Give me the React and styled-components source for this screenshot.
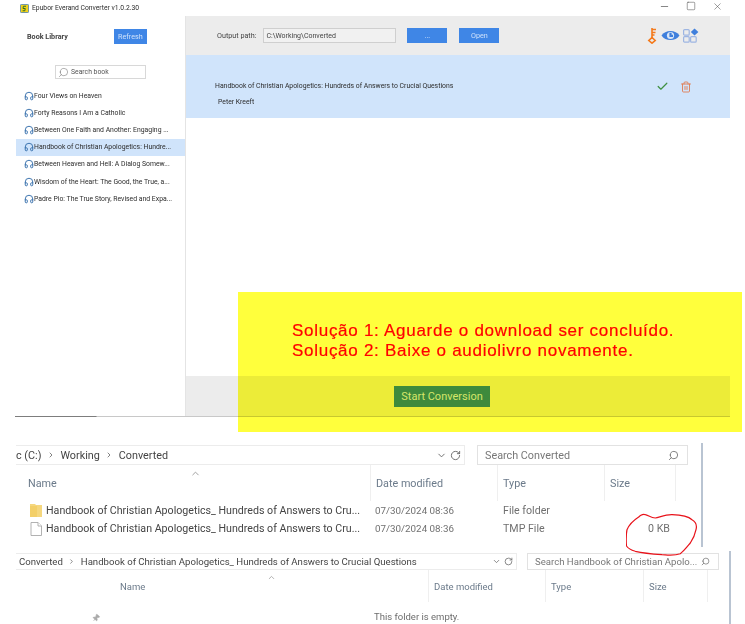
import React from 'react';
import styled, { createGlobalStyle } from 'styled-components';
import { Headphones, Check, Trash2, Search, ChevronDown, RotateCw, ChevronUp, ChevronRight, Minus, Square, X, Pin } from 'lucide-react';

const GlobalStyle = createGlobalStyle`
  html, body { margin: 0; padding: 0; background: #fff; }
  body { font-family: Roboto, "Open Sans", "Liberation Sans", sans-serif; }
  svg { flex: none; }
`;

const Page = styled.div`
  position: relative;
  width: 745px;
  height: 624px;
  overflow: hidden;
  background: #fff;
  filter: blur(0.35px);
`;

const AppWindow = styled.div`
  width: 730px;
  height: 417px;
  display: flex;
  flex-direction: column;
`;

const WindowEdge = styled.div`
  height: 1px;
  flex: none;
  margin-left: 15px;
  background: linear-gradient(to right, #7d7d7d 0, #7d7d7d 81px, #c8c8c8 82px, #c8c8c8 100%);
`;

const TitleBar = styled.div`
  height: 16px;
  display: flex;
  align-items: center;
  padding-left: 20px;
  gap: 3px;
  font-size: 6.75px;
  color: #2c2c2c;
`;

const WindowButtons = styled.div`
  position: absolute;
  top: 1px;
  left: 659px;
  display: flex;
  gap: 16px;
  color: #444;
`;

const AppBody = styled.div`
  flex: 1;
  display: flex;
  min-height: 0;
`;

const Sidebar = styled.div`
  width: 186px;
  flex: none;
  border-right: 1px solid #e4e4e4;
  box-sizing: border-box;
  padding-left: 16px;
  display: flex;
  flex-direction: column;
`;

const LibraryHead = styled.div`
  display: flex;
  align-items: center;
  height: 32px;
  margin-top: 4px;
  padding-left: 11px;
  font-size: 7.2px;
  font-weight: 700;
  color: #444;
`;

const BlueButton = styled.div`
  width: ${p => p.$w}px;
  height: 15px;
  margin-left: ${p => p.$ml}px;
  flex: none;
  background: #3f86e6;
  color: #cfe2fb;
  font-size: 7.2px;
  font-weight: 400;
  display: flex;
  align-items: center;
  justify-content: center;
`;

const SearchBox = styled.div`
  width: 91px;
  height: 14px;
  margin: 13px 0 8px 39px;
  border: 1px solid #d8d8d8;
  box-sizing: border-box;
  display: flex;
  align-items: center;
  gap: 2px;
  padding-left: 2px;
  font-size: 6.8px;
  color: #555;
`;

const BookRow = styled.div`
  height: 17.2px;
  display: flex;
  align-items: center;
  gap: 0;
  padding-left: 8px;
  font-size: 6.85px;
  color: #2c2c2c;
  white-space: nowrap;
  background: ${p => (p.$active ? '#d0e4fb' : 'transparent')};
`;

const Main = styled.div`
  flex: 1;
  display: flex;
  flex-direction: column;
  min-width: 0;
`;

const Toolbar = styled.div`
  height: 39px;
  background: #ececec;
  display: flex;
  align-items: center;
  padding-left: 31px;
  font-size: 7.2px;
  color: #444;
`;

const PathInput = styled.div`
  width: 133px;
  height: 15px;
  margin-left: 7px;
  flex: none;
  box-sizing: border-box;
  border: 1px solid #cfcfcf;
  background: #f1f1f1;
  display: flex;
  align-items: center;
  padding-left: 2px;
  font-size: 7px;
`;

const ToolIcons = styled.div`
  margin-left: auto;
  margin-right: 31px;
  display: flex;
  align-items: center;
  gap: 3px;
`;

const TaskRow = styled.div`
  height: 63px;
  background: #d0e4fb;
  display: flex;
  align-items: center;
  padding-left: 29px;
  color: #2c2c2c;
  font-size: 6.85px;
`;

const TaskText = styled.div`
  display: flex;
  flex-direction: column;
  gap: 6px;
  line-height: 10px;
  margin-top: 14px;
`;

const Author = styled.div`
  padding-left: 3px;
`;

const TaskActions = styled.div`
  margin-left: auto;
  margin-right: 38px;
  display: flex;
  align-items: center;
  gap: 11px;
`;

const Spacer = styled.div`
  flex: 1;
`;

const Footer = styled.div`
  height: 40px;
  background: #ececec;
  display: flex;
  align-items: center;
  justify-content: center;
  padding-right: 32px;
  flex: none;
`;

const ConvertButton = styled.div`
  position: relative;
  z-index: 3;
  width: 96px;
  height: 21px;
  background: #3e8a3c;
  box-sizing: border-box;
  color: #d5e66a;
  font-size: 11px;
  display: flex;
  align-items: center;
  justify-content: center;
`;

const Notice = styled.div`
  position: absolute;
  z-index: 2;
  left: 238px;
  top: 292px;
  width: 504px;
  height: 140px;
  box-sizing: border-box;
  padding: 29px 0 0 54px;
  background: #ffff3c;
  mix-blend-mode: multiply;
  color: #ff0000;
  font-family: "Liberation Sans", sans-serif;
  font-size: 17px;
  line-height: 20px;
  letter-spacing: 0.72px;
  -webkit-text-stroke: 0.2px #ff0000;
  white-space: nowrap;
`;

const Explorer = styled.div`
  width: ${p => p.$w}px;
  margin-top: ${p => p.$mt}px;
  color: #555;
`;

const AddressBar = styled.div`
  display: flex;
  align-items: center;
  height: ${p => p.$h}px;
  margin-left: 16px;
  font-size: ${p => p.$fs}px;
  color: #444;
`;

const Crumbs = styled.div`
  flex: 1;
  display: flex;
  align-items: center;
  gap: 5.5px;
  white-space: nowrap;
  height: 100%;
  box-sizing: border-box;
  padding-left: ${p => p.$pad || 0}px;
  border-top: 1px solid #ececec;
  border-bottom: 1px solid #ececec;
  overflow: hidden;
`;

const AddressTools = styled.div`
  width: ${p => p.$w}px;
  flex: none;
  display: flex;
  align-items: center;
  justify-content: flex-end;
  gap: 3px;
  height: 100%;
  box-sizing: border-box;
  border: 1px solid #ececec;
  border-left: none;
  color: #666;
  padding-right: 3px;
`;

const ExplorerSearch = styled.div`
  width: ${p => p.$w}px;
  flex: none;
  margin-left: ${p => p.$gap}px;
  height: 100%;
  box-sizing: border-box;
  border: 1px solid #e2e2e2;
  display: flex;
  align-items: center;
  justify-content: space-between;
  padding: 0 8px 0 7px;
  color: #777;
  white-space: nowrap;
`;

const ColumnRow = styled.div`
  position: relative;
  display: grid;
  grid-template-columns: ${p => p.$cols};
  align-items: center;
  height: ${p => p.$h}px;
  padding-left: ${p => p.$pad}px;
  font-size: ${p => p.$fs}px;
  color: #6b7a8a;
`;

const Column = styled.div`
  height: 100%;
  display: flex;
  align-items: center;
  padding-left: 5px;
  border-right: 1px solid #efefef;
  box-sizing: border-box;
`;

const SortCaret = styled.div`
  position: absolute;
  left: ${p => p.$left}px;
  top: ${p => p.$top}px;
  color: #999;
  display: flex;
`;

const FileRow = styled.div`
  display: grid;
  grid-template-columns: 375px 128px 107px 60px;
  align-items: center;
  height: 18.5px;
  font-size: 10.65px;
  color: #707070;
`;

const FileName = styled.div`
  display: flex;
  align-items: center;
  gap: 4px;
  padding-left: 30px;
  color: #444;
  white-space: nowrap;
`;

const DateCell = styled.div`
  font-size: 9.8px;
`;

const SizeCell = styled.div`
  text-align: right;
`;

const ScrollLine = styled.div`
  position: absolute;
  left: ${p => p.$left}px;
  top: ${p => p.$top}px;
  width: 1.5px;
  height: ${p => p.$h}px;
  background: #b9c4d2;
`;

const EmptyRow = styled.div`
  position: relative;
  height: 28px;
  font-size: 9.5px;
  color: #6d6d6d;
  padding-left: 374px;
  display: flex;
  align-items: center;
`;

const PinMark = styled.div`
  position: absolute;
  left: 92px;
  top: 12px;
  color: #aaa;
  display: flex;
`;

const Circle = styled.svg`
  position: absolute;
  left: 626px;
  top: 513px;
  z-index: 4;
`;

const books = [
  'Four Views on Heaven',
  'Forty Reasons I Am a Catholic',
  'Between One Faith and Another: Engaging ...',
  'Handbook of Christian Apologetics: Hundre...',
  'Between Heaven and Hell: A Dialog Somew...',
  'Wisdom of the Heart: The Good, the True, a...',
  'Padre Pio: The True Story, Revised and Expa...',
];

const AppLogo = () => (
  <svg width="9" height="9" viewBox="0 0 12 12">
    <rect x="0.5" y="0.5" width="11" height="11" rx="1.5" fill="#f2d21b" stroke="#2b6fc4" />
    <path d="M8 3 L4.5 3 L4 6 L7 6 L6.5 9 L3.5 9" fill="none" stroke="#2a6a2a" strokeWidth="1.3" />
  </svg>
);

const KeyIcon = () => (
  <svg width="11" height="17" viewBox="0 0 11 17" fill="none" stroke="#f47a1c" strokeWidth="1.6">
    <path d="M5 1 V11 M5 2.5 H9 M5 5.5 H8.5 M5 8 H7.5" />
    <path d="M5 10.5 L8.2 13.5 L5 16.2 L1.8 13.5 Z" />
  </svg>
);

const EyeIcon = () => (
  <svg width="19" height="13" viewBox="0 0 19 13">
    <path d="M0.5 6.5 C4 0.5 15 0.5 18.5 6.5 C15 12.5 4 12.5 0.5 6.5 Z" fill="#3f7fdc" />
    <circle cx="9.5" cy="6.5" r="3.6" fill="#d9e6f7" />
    <path d="M9.5 3.8 V6.8 H12" fill="none" stroke="#3f7fdc" strokeWidth="2.2" />
  </svg>
);

const AppsIcon = () => (
  <svg width="16" height="15" viewBox="0 0 16 15" fill="none" stroke="#9db5e2" strokeWidth="1.2">
    <rect x="0.6" y="1.6" width="5.6" height="5.6" rx="1" />
    <rect x="0.6" y="8.6" width="5.6" height="5.6" rx="1" />
    <rect x="7.6" y="8.6" width="5.6" height="5.6" rx="1" />
    <path d="M11.5 0.5 L15.4 4 L11.5 7.5 L7.8 4 Z" fill="#3f7fdc" stroke="none" />
  </svg>
);

const FolderIcon = () => (
  <svg width="12" height="14" viewBox="0 0 12 14">
    <path d="M0 1 H5 L6 2 H12 V14 H0 Z" fill="#f5d77e" />
    <rect x="0" y="3" width="7" height="11" fill="#f3cf68" />
  </svg>
);

const FileIcon = () => (
  <svg width="12" height="14" viewBox="0 0 12 14" fill="#fff" stroke="#a9a9a9" strokeWidth="0.9">
    <path d="M1 0.5 H8 L11.5 4 V13.5 H1 Z" />
    <path d="M8 0.5 V4 H11.5" />
  </svg>
);

const App = () => (
  <Page>
    <GlobalStyle />
    <AppWindow>
      <TitleBar>
        <AppLogo />
        Epubor Everand Converter v1.0.2.30
      </TitleBar>
      <WindowButtons>
        <Minus size={11} strokeWidth={1.4} />
        <Square size={10} strokeWidth={1.2} />
        <X size={11} strokeWidth={1.1} />
      </WindowButtons>
      <AppBody>
        <Sidebar>
          <LibraryHead>
            Book Library
            <BlueButton $w={33} $ml={46}>Refresh</BlueButton>
          </LibraryHead>
          <SearchBox>
            <Search size={11} strokeWidth={1} style={{ transform: 'scaleX(-1)' }} />
            Search book
          </SearchBox>
          {books.map((title, i) => (
            <BookRow key={title} $active={i === 3}>
              <Headphones size={10} strokeWidth={2.2} color="#2f6aa8" />
              {title}
            </BookRow>
          ))}
        </Sidebar>
        <Main>
          <Toolbar>
            Output path:
            <PathInput>C:\Working\Converted</PathInput>
            <BlueButton $w={40} $ml={11}>...</BlueButton>
            <BlueButton $w={40} $ml={12}>Open</BlueButton>
            <ToolIcons>
              <KeyIcon />
              <EyeIcon />
              <AppsIcon />
            </ToolIcons>
          </Toolbar>
          <TaskRow>
            <TaskText>
              <div>Handbook of Christian Apologetics: Hundreds of Answers to Crucial Questions</div>
              <Author>Peter Kreeft</Author>
            </TaskText>
            <TaskActions>
              <Check size={13} strokeWidth={2.2} color="#3f9142" />
              <Trash2 size={12} strokeWidth={1.8} color="#e07a50" />
            </TaskActions>
          </TaskRow>
          <Spacer />
          <Footer>
            <ConvertButton>Start Conversion</ConvertButton>
          </Footer>
        </Main>
      </AppBody>
      <WindowEdge />
    </AppWindow>
    <Notice>
      Solução 1: Aguarde o download ser concluído.
      <br />
      Solução 2: Baixe o audiolivro novamente.
    </Notice>

    <Explorer $w={688} $mt={28}>
      <AddressBar $h={20} $fs={10.8}>
        <Crumbs>
          c (C:) <ChevronRight size={8} /> Working <ChevronRight size={8} /> Converted
        </Crumbs>
        <AddressTools $w={46}>
          <ChevronDown size={11} />
          <RotateCw size={11} />
        </AddressTools>
        <ExplorerSearch $w={211} $gap={12}>
          Search Converted
          <Search size={11} style={{ transform: 'scaleX(-1)' }} />
        </ExplorerSearch>
      </AddressBar>
      <ColumnRow $h={36} $fs={10.8} $pad={23} $cols="348px 127px 107px 71px">
        <Column>Name</Column>
        <Column>Date modified</Column>
        <Column>Type</Column>
        <Column>Size</Column>
        <SortCaret $left={190} $top={3}><ChevronUp size={11} /></SortCaret>
      </ColumnRow>
      <FileRow>
        <FileName><FolderIcon />Handbook of Christian Apologetics_ Hundreds of Answers to Cru...</FileName>
        <DateCell>07/30/2024 08:36</DateCell>
        <div>File folder</div>
        <SizeCell />
      </FileRow>
      <FileRow>
        <FileName><FileIcon />Handbook of Christian Apologetics_ Hundreds of Answers to Cru...</FileName>
        <DateCell>07/30/2024 08:36</DateCell>
        <div>TMP File</div>
        <SizeCell>0 KB</SizeCell>
      </FileRow>
    </Explorer>
    <ScrollLine $left={701} $top={443} $h={104} />

    <Explorer $w={719} $mt={15}>
      <AddressBar $h={17} $fs={9.6}>
        <Crumbs $pad={3}>
          Converted <ChevronRight size={7} /> Handbook of Christian Apologetics_ Hundreds of Answers to Crucial Questions
        </Crumbs>
        <AddressTools $w={30}>
          <ChevronDown size={9} />
          <RotateCw size={9} />
        </AddressTools>
        <ExplorerSearch $w={192} $gap={10}>
          Search Handbook of Christian Apolo...
          <Search size={9} style={{ transform: 'scaleX(-1)' }} />
        </ExplorerSearch>
      </AddressBar>
      <ColumnRow $h={32} $fs={9.5} $pad={115} $cols="314px 117px 98px 64px">
        <Column>Name</Column>
        <Column>Date modified</Column>
        <Column>Type</Column>
        <Column>Size</Column>
        <SortCaret $left={267} $top={3}><ChevronUp size={9} /></SortCaret>
      </ColumnRow>
      <EmptyRow>
        This folder is empty.
        <PinMark><Pin size={8} fill="#aaa" style={{ transform: 'rotate(40deg)' }} /></PinMark>
      </EmptyRow>
    </Explorer>
    <ScrollLine $left={729} $top={551} $h={73} />

    <Circle width="72" height="44" viewBox="0 0 72 44" fill="none" stroke="#e8131b" strokeWidth="1.2">
      <path d="M12.7 4 C15 1.5 18 1 19.3 1.7 C22 2 25 5 29.3 5 C34 4 40 1.5 46 1.7 C54 2 62 3 66 6.7 C70 9 71 13 70 16.7 C69 22 67 26 64.3 30 C61 34 58 38 54.3 40.7 C48 43 42 42 36 41.7 C27 41 17 40 9.3 38.3 C5 37 2 35.5 0.5 33 C0 27 0 22 1 16.7 C3 12 8 7 12.7 4 Z" />
    </Circle>
  </Page>
);

export default App;
